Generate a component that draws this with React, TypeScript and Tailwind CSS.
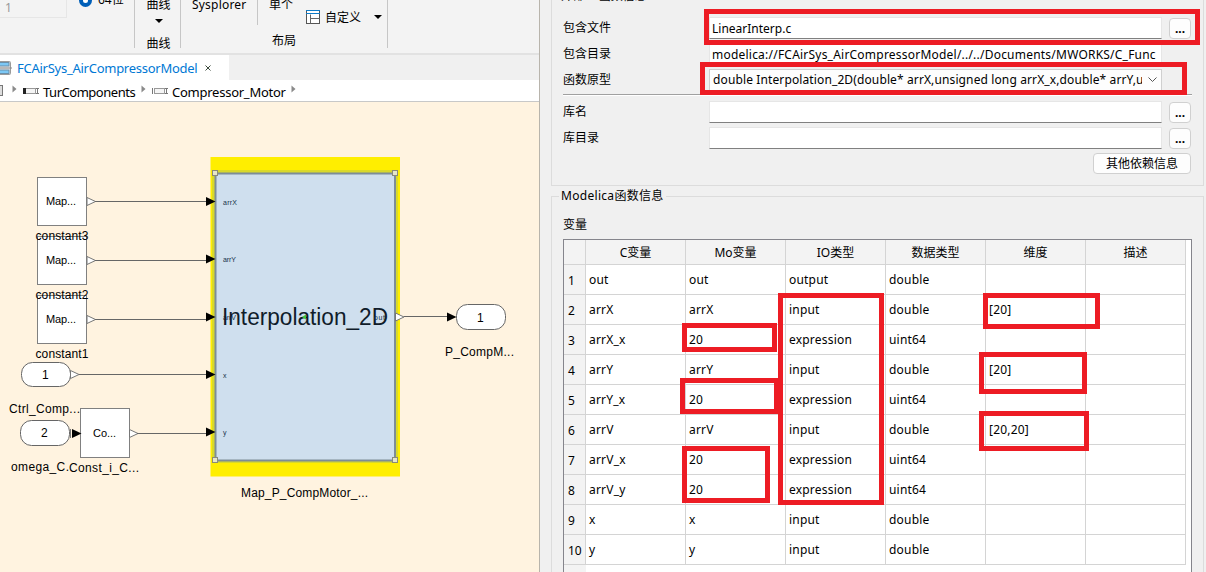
import { Fragment, type ReactNode } from "react"

const Caret = () => (
  <svg width="8" height="4" viewBox="0 0 8 4">
    <path d="M0 0h8L4 4z" fill="#000" />
  </svg>
)

const LayoutIcon = () => (
  <svg width="14" height="14" viewBox="0 0 14 14" fill="none" className="shrink-0">
    <rect x="0.5" y="0.5" width="13" height="13" fill="#fff" stroke="#555" />
    <path d="M4.5 4.5v9M4.5 8.5h9" stroke="#666" />
    <path d="M0 0.5h14M0 3.5h14" stroke="#0f7bc7" />
  </svg>
)

const ModelIcon = () => (
  <svg width="12" height="14" viewBox="0 0 12 14" className="shrink-0">
    <path d="M0 0.5h9.5q1 0 1 1v11q0 1-1 1H0" fill="#e8e8e8" stroke="#9a9a9a" />
    <rect x="-1" y="1.5" width="10" height="3.5" fill="#7cc8f5" stroke="#6a8fa9" />
    <rect x="-1" y="9" width="10" height="3.5" fill="#7cc8f5" stroke="#6a8fa9" />
    <path d="M0 7h12" stroke="#888" />
  </svg>
)

const PartIcon = ({ dark }: { dark?: boolean }) => (
  <svg width="16" height="8" viewBox="0 0 16 8" className="shrink-0">
    <rect x="2.5" y="1.5" width="10" height="5" fill="#f5f5f5" stroke="#999" />
    <rect x="0" y="1" width={dark ? 3 : 1} height="6" fill={dark ? "#222" : "#777"} />
    <path d="M13 1.5h3M13 6.5h3M14.5 1v6" stroke="#777" />
  </svg>
)

const Crumb = () => (
  <svg width="5" height="8" viewBox="0 0 5 8" className="mb-1 shrink-0">
    <path d="M0.5 0.5l4 3.5-4 3.5z" fill="#8a8a8a" />
  </svg>
)

const Toolbar = () => (
  <div className="flex h-[53px] shrink-0 overflow-hidden bg-[#f3f3f3]">
    <div className="flex h-12 w-[135px] border-r border-[#c6c6c6]">
      <div className="h-[18px] w-[67px] border-r border-b border-[#e6e6e6] pl-[5px] text-[12px] leading-[16px] text-[#999]">1</div>
      <div className="-mt-2 ml-3 flex h-4 items-center gap-[6px]">
        <span className="h-[13px] w-[13px] rounded-full border-4 border-[#005fb8] bg-white"></span>
        <span>64位</span>
      </div>
    </div>
    <div className="flex h-12 w-[46px] flex-col items-center border-r border-[#c6c6c6] pl-[2px]">
      <span className="-mt-[3px] h-4 leading-4">曲线</span>
      <span className="mt-[6px] flex h-1"><Caret /></span>
      <span className="mt-[13px] h-4 leading-4">曲线</span>
    </div>
    <div className="flex h-12 w-[207px] flex-col border-r border-[#c6c6c6]">
      <div className="flex h-7">
        <div className="w-[77px] border-r border-[#c6c6c6] pl-[11px]">
          <span className="-mt-[3px] block h-4 leading-4 tracking-[0.2px]">Sysplorer</span>
        </div>
        <span className="-mt-[3px] ml-[11px] h-4 leading-4">单个</span>
        <div className="mt-[9px] ml-[13px] flex h-4 items-center">
          <LayoutIcon />
          <span className="mt-[2px] ml-[5px]">自定义</span>
          <span className="ml-[13px]"><Caret /></span>
        </div>
      </div>
      <span className="mt-2 ml-[91px] h-4 leading-4">布局</span>
    </div>
  </div>
)

const sources = [
  { y: 177, name: "constant3" },
  { y: 236, name: "constant2" },
  { y: 295, name: "constant1" },
]

const wires = [
  { from: 95, y: 201.5, to: 201.5, port: "arrX", w: 14 },
  { from: 95, y: 260.5, to: 259, port: "arrY", w: 13 },
  { from: 95, y: 319.5, to: 317, port: "arrV", w: 13 },
  { from: 79, y: 374.5, to: 374.5, port: "x", w: 4 },
  { from: 137, y: 433.5, to: 432, port: "y", w: 4 },
]

const handles = [[212, 170], [392, 170], [212, 457], [392, 457]]

const Arrow = ({ x, y }: { x: number; y: number }) => (
  <path d={`M${x - 9} ${y - 4.5}l9.5 4.5-9.5 4.5z`} fill="#000" />
)

const OutPort = ({ x, y }: { x: number; y: number }) => (
  <path d={`M${x} ${y - 4}l8.5 4-8.5 4z`} fill="#fff" stroke="#777" />
)

const Diagram = () => (
  <svg width="539" height="470" viewBox="0 102 539 470" className="block font-['Liberation_Sans']" fontSize="12">
    {sources.map(({ y, name }) => (
      <Fragment key={name}>
        <rect x="37.5" y={y + 0.5} width="49" height="48" fill="#fff" stroke="#808080" />
        <text x="46" y={y + 28} fontSize="11" textLength="30">Map...</text>
        <OutPort x={87} y={y + 24.5} />
      </Fragment>
    ))}
    {sources.map(({ y, name }) => (
      <text key={name} x="35.5" y={y + 63} textLength="53">{name}</text>
    ))}

    <rect x="21.5" y="362.5" width="49" height="24" rx="11" fill="#fff" stroke="#666" />
    <text x="42" y="379">1</text>
    <OutPort x={70.5} y={374.5} />
    <text x="9" y="413" textLength="71">Ctrl_Comp...</text>

    <rect x="20.5" y="420.5" width="49" height="25" rx="11" fill="#fff" stroke="#666" />
    <text x="41" y="437">2</text>
    <path d="M70.5 429v9" stroke="#777" />
    <text x="11" y="470.5" textLength="58">omega_C.</text>
    <rect x="80.5" y="408.5" width="49" height="49" fill="#fff" stroke="#808080" />
    <Arrow x={81} y={433.5} />
    <text x="93" y="437" fontSize="11" textLength="23">Co...</text>
    <OutPort x={129.5} y={433.5} />
    <text x="69" y="471.5" textLength="70">Const_i_C...</text>

    {/* selected block with its highlight frame */}
    <rect x="210.5" y="157" width="189.5" height="319.5" fill="#ffee00" />
    <rect x="212" y="170" width="186" height="293" fill="#d9d92a" />
    <rect x="215.5" y="173.5" width="179.5" height="287" fill="#cfdfee" stroke="#7d8d97" strokeWidth="2" />
    {handles.map(([x, y]) => (
      <rect key={`${x}-${y}`} x={x + 0.5} y={y + 0.5} width="5" height="5" fill="#e6e6c8" stroke="#8a8a7a" />
    ))}
    {wires.map(({ from, y, to, port, w }) => (
      <Fragment key={port}>
        <path d={`M${from} ${y}H207`} stroke="#666" />
        <Arrow x={215} y={to} />
        <text x="223" y={to + 3} fontSize="7" textLength={w} fill="#16324a">{port}</text>
      </Fragment>
    ))}
    <text x="222" y="325" fontSize="23.5" textLength="166" lengthAdjust="spacingAndGlyphs" fill="#101c2a">Interpolation_2D</text>
    <path d="M302 317l4-2.5v5z" fill="#3fc43f" />
    <text x="374" y="320" fontSize="7" textLength="11" fill="#16324a">out</text>
    <OutPort x={395.5} y={317} />
    <path d="M404 316.500H450" stroke="#666" />
    <Arrow x={456} y={317} />
    <rect x="456.5" y="304.5" width="49" height="25" rx="11" fill="#fff" stroke="#666" />
    <text x="477" y="321.5">1</text>
    <text x="445" y="356" textLength="69">P_CompM...</text>
    <text x="241" y="497" textLength="127">Map_P_CompMotor_...</text>
  </svg>
)

const ModelPane = () => (
  <div className="flex w-[540px] shrink-0 flex-col border-r border-[#b8b4ac]">
    <Toolbar />
    <div className="flex h-[27px] shrink-0 border-t-2 border-[#e2e2e2] bg-[#f0f0f0]">
      <div className="flex w-[229px] items-center bg-white text-[#0078d4]">
        <ModelIcon />
        <span className="ml-[5px] w-[188px] text-[13px] tracking-[-0.26px]">FCAirSys_AirCompressorModel</span>
        <svg width="6" height="6" viewBox="0 0 6 6"><path d="M0.5 0.5l5 5M5.5 0.5l-5 5" stroke="#3c4a3c" /></svg>
      </div>
    </div>
    <div className="flex h-[22px] shrink-0 items-center border-b border-[#c8c8c8] bg-white text-[13px]">
      <span className="mr-[9px] h-[11px] w-[3px] border border-l-0 border-[#777] bg-[#ddd]"></span>
      <Crumb />
      <span className="ml-[6px]"><PartIcon dark /></span>
      <span className="mt-[2px] ml-1 w-[98px] tracking-[-0.48px]">TurComponents</span>
      <Crumb />
      <span className="ml-[6px]"><PartIcon /></span>
      <span className="mt-[2px] ml-1 w-[119px] tracking-[-0.25px]">Compressor_Motor</span>
      <Crumb />
    </div>
    <div className="h-[470px] bg-[#fff3e0]">
      <Diagram />
    </div>
  </div>
)

const Field = ({ label, children, more }: { label: string; children?: ReactNode; more?: boolean }) => (
  <div className="flex h-[26px] items-center">
    <span className="w-[146px]">{label}</span>
    <div className="h-[22px] w-[453px] overflow-hidden border border-[#e6e6e6] border-b-[#808080] bg-white pl-[2px] leading-[22px] whitespace-nowrap">{children}</div>
    {more && <More />}
  </div>
)

const More = () => (
  <span className="ml-[7px] flex h-[21px] w-[22px] items-center justify-center rounded-[4px] border border-[#d0d0d0] bg-[#fdfdfd] pt-[2px] font-bold">...</span>
)

const headers = ["C变量", "Mo变量", "IO类型", "数据类型", "维度", "描述"]
const rows = [
  ["out", "out", "output", "double", ""],
  ["arrX", "arrX", "input", "double", "[20]"],
  ["arrX_x", "20", "expression", "uint64", ""],
  ["arrY", "arrY", "input", "double", "[20]"],
  ["arrY_x", "20", "expression", "uint64", ""],
  ["arrV", "arrV", "input", "double", "[20,20]"],
  ["arrV_x", "20", "expression", "uint64", ""],
  ["arrV_y", "20", "expression", "uint64", ""],
  ["x", "x", "input", "double", ""],
  ["y", "y", "input", "double", ""],
]

const VariableTable = () => (
  <div className="ml-[11px] h-[333px] w-[629px] border border-b-0 border-[#85858c] bg-[linear-gradient(to_right,#f3f3f3_22px,#fff_22px)]">
    <div className="grid w-[622px] grid-cols-[22px_repeat(6,100px)]">
      <div className="h-[25px] border-r border-b border-[#d4d4d4] bg-[#f3f3f3]"></div>
      {headers.map((h) => (
        <div key={h} className="flex items-center justify-center border-r border-b border-[#d4d4d4] bg-[#f3f3f3] pt-[2px]">{h}</div>
      ))}
      {rows.map((row, i) => (
        <Fragment key={i}>
          <div className="flex h-[30px] items-center border-r border-b border-[#d4d4d4] bg-[#f3f3f3] pt-[2px] pl-1">{i + 1}</div>
          {[...row, ""].map((cell, j) => (
            <div key={j} className="flex items-center border-r border-b border-[#d4d4d4] bg-white pl-[3px] tracking-[0.2px]">{cell}</div>
          ))}
        </Fragment>
      ))}
    </div>
  </div>
)

const FunctionPane = () => (
  <div className="flex w-[666px] flex-col bg-[#f0f0f0] pl-[11px]">
    <div className="flex h-[186px] w-[653px] shrink-0 flex-col border-r border-b border-l border-[#dcdcdc] pl-[11px]">
      <span className="-mt-[12px] -ml-[2px] h-[27px] leading-4">外部 C 函数信息</span>
      <Field label="包含文件" more>LinearInterp.c</Field>
      <Field label="包含目录"><span className="tracking-[0.22px]">modelica://FCAirSys_AirCompressorModel/../../Documents/MWORKS/C_Func</span></Field>
      <div className="flex h-[26px] items-center">
        <span className="w-[146px]">函数原型</span>
        <div className="flex h-[22px] w-[453px] items-center border border-[#d0d0d0] bg-[#fdfdfd] pl-[3px]">
          <span className="w-[429px] overflow-hidden tracking-[0.12px] whitespace-nowrap">double Interpolation_2D(double* arrX,unsigned long arrX_x,double* arrY,u</span>
          <svg width="9" height="6" viewBox="0 0 9 6" className="ml-[6px] shrink-0"><path d="M0.5 0.5l4 4 4-4" fill="none" stroke="#555" /></svg>
        </div>
      </div>
      <div className="mt-[1px] mb-[3px] h-[2px] w-[629px] shrink-0 border-t border-b border-t-[#a0a0a0] border-b-white"></div>
      <Field label="库名" more />
      <Field label="库目录" more />
      <div className="mt-[2px] ml-[530px] flex h-[21px] w-[98px] shrink-0 items-center justify-center rounded-[4px] border border-[#d0d0d0] bg-[#fdfdfd]">其他依赖信息</div>
    </div>
    <fieldset className="mt-[1px] h-[385px] w-[653px] border border-b-0 border-[#dcdcdc]">
      <legend className="ml-[7px] h-[18px] px-[2px] leading-[18px] tracking-[0.3px]">Modelica函数信息</legend>
      <div className="mt-[11px] mb-[5px] ml-[11px] h-[18px] leading-[18px]">变量</div>
      <VariableTable />
    </fieldset>
  </div>
)

// review marks drawn over the form
const marks = [
  "left-[704px] top-[9px] w-[496px] h-[36px]",
  "left-[700px] top-[62px] w-[487px] h-[33px]",
  "left-[778px] top-[293px] w-[106px] h-[212px]",
  "left-[682px] top-[323px] w-[95px] h-[29px]",
  "left-[680px] top-[378px] w-[99px] h-[36px]",
  "left-[682px] top-[446px] w-[88px] h-[57px]",
  "left-[983px] top-[293px] w-[117px] h-[36px]",
  "left-[979px] top-[352px] w-[108px] h-[42px]",
  "left-[979px] top-[411px] w-[110px] h-[40px]",
]

const App = () => {
  return (
    <div className="relative flex h-[572px] w-[1206px] overflow-hidden font-['Noto_Sans','Noto_Sans_CJK_SC',sans-serif] text-[12px] leading-4 text-black">
      <ModelPane />
      <FunctionPane />
      {marks.map((m) => (
        <div key={m} className={`absolute border-[5px] border-[#ed1c24] ${m}`}></div>
      ))}
    </div>
  )
}

export default App
